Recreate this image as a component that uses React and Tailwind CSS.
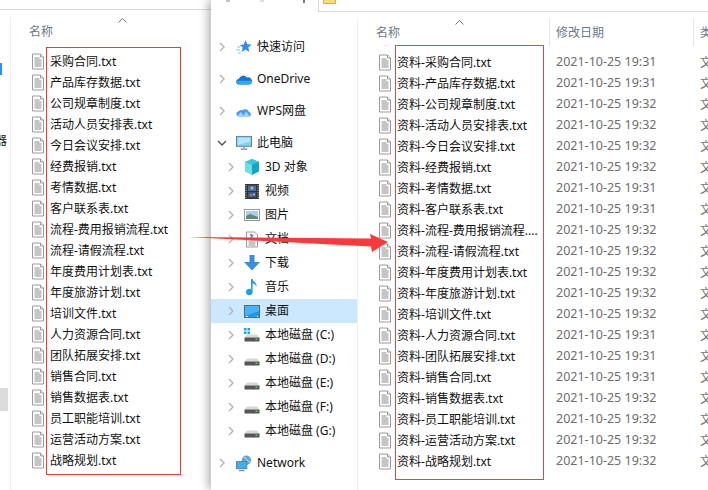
import React from "react";

const names = ["采购合同","产品库存数据","公司规章制度","活动人员安排表","今日会议安排","经费报销","考情数据","客户联系表","流程-费用报销流程","流程-请假流程","年度费用计划表","年度旅游计划","培训文件","人力资源合同","团队拓展安排","销售合同","销售数据表","员工职能培训","运营活动方案","战略规划"];
const minutes = [31,31,32,32,32,32,31,31,32,32,32,32,32,31,31,31,32,32,32,32];

const FileIcon = () => (
  <svg width="14" height="17" viewBox="0 0 14 17" className="shrink-0">
    <path d="M1.5 1h8l3 3v12h-11z" fill="#fff" stroke="#9a9a9a" />
    <path d="M9.5 1v3h3" fill="#eee" stroke="#9a9a9a" />
    <path d="M3.5 5h5M3.5 7h7M3.5 9h7M3.5 11h7M3.5 13h7" stroke="#8c8c8c" />
  </svg>
);

const Chevron = ({ open }) => (
  <svg width="10" height="10" viewBox="0 0 10 10" className="shrink-0">
    {open ? <path d="M1 3l4 4 4-4" fill="none" stroke="#555" strokeWidth="1.4" /> : <path d="M3 1l4 4-4 4" fill="none" stroke="#b5b5b5" strokeWidth="1.4" />}
  </svg>
);

const Up = () => (
  <svg width="9" height="5" viewBox="0 0 9 5"><path d="M.5 4.5l4-4 4 4" fill="none" stroke="#777" /></svg>
);

const Star = () => (
  <svg width="16" height="16" viewBox="0 0 16 16">
    <path d="M9.5 1l1.8 4.3 4.4.3-3.4 2.9 1.1 4.5-3.9-2.4-3.9 2.4 1.1-4.5-3-2.6 4-.4z" fill="#2f8fe8" />
    <path d="M1 8h3M0 11h4M2 14h3" stroke="#8cc4f2" />
  </svg>
);
const OneDrive = () => (
  <svg width="16" height="11" viewBox="0 0 16 11">
    <path d="M3 10.5a2.7 2.7 0 0 1-.3-5.4A4.6 4.6 0 0 1 11 3.6a3.4 3.4 0 0 1 2.5 6.9z" fill="#0f78d4" />
    <path d="M3 10.5a2.5 2.5 0 0 1-2-3.8h14.5a2.8 2.8 0 0 1-2 3.8z" fill="#37a5ea" />
  </svg>
);
const Wps = () => (
  <svg width="16" height="11" viewBox="0 0 16 11">
    <path d="M3 10.5a2.6 2.6 0 0 1-.2-5.2 3 3 0 0 1 3.6-1A4 4 0 0 1 13 6a2.4 2.4 0 0 1 .5 4.5z" fill="#4a9bf5" />
    <path d="M1.5 10L5 6l3 4.5zM7 10.5l3-5 4 5z" fill="#a9d2fb" />
  </svg>
);
const Pc = () => (
  <svg width="17" height="16" viewBox="0 0 17 16">
    <rect x=".5" y="1" width="16" height="10.5" fill="#7fd0f7" stroke="#6b7e8c" />
    <path d="M2 2.5h13v4L2 10z" fill="#b6e6fb" />
    <path d="M5 14.5h7" stroke="#7d97a8" strokeWidth="1.5" /><path d="M8.5 12v2" stroke="#9ab" strokeWidth="2" />
  </svg>
);
const Cube = () => (
  <svg width="16" height="16" viewBox="0 0 16 16">
    <path d="M8 0l7 3v9.5L8 16z" fill="#12a5c4" />
    <path d="M8 0L1 3v9.5L8 16z" fill="#6fdde6" />
    <path d="M1 3l7 3 7-3-7-3z" fill="#39c5dc" />
  </svg>
);
const Film = () => (
  <svg width="14" height="15" viewBox="0 0 14 15">
    <rect width="14" height="15" fill="#333" />
    <path d="M1 1v13M13 1v13" stroke="#bbb" strokeDasharray="1.2 1.2" />
    <rect x="3" y="1.5" width="8" height="5.5" fill="#3f6fb5" />
    <rect x="3" y="8" width="8" height="5.5" fill="#2d5a9c" />
    <circle cx="7" cy="4" r="1.6" fill="#e8b23a" /><circle cx="6" cy="11" r="1.6" fill="#d95f3a" /><circle cx="9" cy="10.5" r="1" fill="#e8d23a" />
  </svg>
);
const Pic = () => (
  <svg width="16" height="12" viewBox="0 0 16 12">
    <rect x=".5" y=".5" width="15" height="11" fill="#fff" stroke="#9a9a9a" />
    <rect x="2" y="2" width="12" height="8" fill="#a9cfe8" />
    <path d="M2 7l4-2 8 3v2H2z" fill="#5d8a76" />
  </svg>
);
const Doc = () => (
  <svg width="14" height="17" viewBox="0 0 14 17">
    <path d="M1.5 1h8l3 3v12h-11z" fill="#fff" stroke="#9a9a9a" />
    <path d="M5 3.5l2.5 1-2 3.5" fill="none" stroke="#2f8fe8" strokeWidth="1.6" />
    <path d="M3.5 10h7M3.5 12h7M3.5 14h7" stroke="#8c8c8c" />
  </svg>
);
const Down = () => (
  <svg width="16" height="16" viewBox="0 0 16 16">
    <path d="M5.5 0h5v7H16l-8 8.5L0 7h5.5z" fill="#3b8ddd" />
  </svg>
);
const Note = () => (
  <svg width="12" height="17" viewBox="0 0 12 17">
    <path d="M5 0h1.6c.4 3 4.4 3.5 4 7.5-.7-1.8-2.4-2.7-4-3V13a3.3 3.3 0 1 1-1.6-2.8z" fill="#1f9bec" />
  </svg>
);
const Desk = () => (
  <svg width="16" height="13" viewBox="0 0 16 13">
    <rect x=".5" y=".5" width="15" height="12" fill="#1e97ee" stroke="#4a6d8a" />
    <path d="M1 1h14v5L1 11z" fill="#48b2f5" />
    <path d="M2 11.5h2M13 11.5h1" stroke="#fff" />
  </svg>
);
const Drive = ({ win }) => (
  <svg width="16" height="14" viewBox="0 0 16 14">
    {win && <path d="M0 0h2.5v2.5H0zM3.5 0H6v2.5H3.5zM0 3.5h2.5V6H0zM3.5 3.5H6V6H3.5z" fill="#17a2ea" />}
    <path d="M3 6.5h10l2.5 3H.5z" fill="#d8d8d8" />
    <rect x=".5" y="9.5" width="15" height="4" fill="#555" />
    <rect x="11.5" y="10.5" width="2" height="1.5" fill="#4fd14f" />
  </svg>
);
const Net = () => (
  <svg width="17" height="17" viewBox="0 0 17 17">
    <circle cx="11" cy="5" r="5" fill="#5aa7dc" />
    <path d="M8 2c2 0 3 1 4 3s2 2 3 1" fill="none" stroke="#cfe8f7" />
    <rect x=".5" y="6.5" width="11" height="7.5" fill="#3fb1f0" stroke="#5c7f97" />
    <path d="M3 16h6" stroke="#7d97a8" strokeWidth="1.5" />
  </svg>
);

const SideRow = ({ icon, label, level = 1, open, active, gap }) => (
  <div className={`flex h-6 items-center ${gap ? "mt-2" : ""} ${active ? "bg-[#cce8ff]" : ""} ${level === 1 ? "pl-[6px]" : "pl-[15px]"}`}>
    <Chevron open={open} />
    <span className={`flex w-4 justify-center ${level === 1 ? "ml-[9px]" : "ml-[8px]"}`}>{icon}</span>
    <span className={`whitespace-nowrap ${level === 1 ? "ml-[5px]" : "ml-[5px]"}`}>{label}</span>
  </div>
);

export default function App() {
  return (
    <div className="relative flex h-[490px] w-[708px] overflow-hidden bg-white text-[12px] leading-none text-[#111] [font-family:'Noto_Sans','Noto_Sans_CJK_SC',sans-serif]">
      {/* back window */}
      <div className="flex w-[211px] shrink-0 flex-col">
        <div className="h-[10px] shrink-0 border-b border-[#d9d9d9]" />
        <div className="flex flex-1">
          <div className="mt-[7px] flex w-[11px] shrink-0 flex-col overflow-hidden border-r border-[#f0f0f0]">
            <div className="mt-[46px] h-[12px] w-[2px] bg-[#2f8fe8]" />
            <div className="mt-[60px] -ml-[5px] text-[12px]">器</div>
            <div className="mt-[241px] h-[23px] w-[8px] bg-[#dcdcdc]" />
          </div>
          <div className="min-w-0 flex-1">
            <div className="relative ml-[18px] mt-[13px] h-[18px] leading-[18px] text-[#6d7a88]">
              名称
              <span className="absolute -top-[5px] left-[89px] flex"><Up /></span>
            </div>
            <div className="ml-[20px] mt-[10px] flex flex-col">
              {names.map((n) => (
                <div key={n} className="flex h-[21px] items-center">
                  <FileIcon />
                  <span className="ml-[5px] whitespace-nowrap">{n}.txt</span>
                </div>
              ))}
            </div>
          </div>
        </div>
      </div>

      {/* front window */}
      <div className="flex min-w-0 flex-1 flex-col bg-white shadow-[-3px_0_9px_rgba(0,0,0,0.3)]">
        <div className="flex h-[12px] shrink-0">
          <div className="relative w-[107px] shrink-0 overflow-hidden">
            <div className="ml-[15px] flex gap-[30px]">
              <div className="h-[2px] w-[4px] bg-[#c4c4c4]" />
              <div className="h-[2px] w-[4px] bg-[#dedede]" />
              <div className="ml-[9px] h-[3px] w-[2px] bg-[#777]" />
            </div>
          </div>
          <div className="flex flex-1 overflow-hidden border-b border-l border-[#d9d9d9] pl-[4px]">
            <div className="h-[4px] w-[13px] shrink-0 border border-t-0 border-[#d8b23e] bg-[#fbdc6f]" />
            <div className="ml-[23px] -mt-[11px] whitespace-nowrap text-[12px] font-bold">资料整理 › 文档 › 工作文件夹 › 文件批量重命名.txt</div>
          </div>
        </div>
        <div className="flex min-h-0 flex-1">
          <div className="mt-[23px] w-[146px] shrink-0 overflow-hidden">
            <SideRow icon={<Star />} label="快速访问" />
            <SideRow icon={<OneDrive />} label="OneDrive" gap />
            <SideRow icon={<Wps />} label="WPS网盘" gap />
            <SideRow icon={<Pc />} label="此电脑" open gap />
            <SideRow level={2} icon={<Cube />} label="3D 对象" />
            <SideRow level={2} icon={<Film />} label="视频" />
            <SideRow level={2} icon={<Pic />} label="图片" />
            <SideRow level={2} icon={<Doc />} label="文档" />
            <SideRow level={2} icon={<Down />} label="下载" />
            <SideRow level={2} icon={<Note />} label="音乐" />
            <SideRow level={2} icon={<Desk />} label="桌面" active />
            <SideRow level={2} icon={<Drive win />} label="本地磁盘 (C:)" />
            <SideRow level={2} icon={<Drive />} label="本地磁盘 (D:)" />
            <SideRow level={2} icon={<Drive />} label="本地磁盘 (E:)" />
            <SideRow level={2} icon={<Drive />} label="本地磁盘 (F:)" />
            <SideRow level={2} icon={<Drive />} label="本地磁盘 (G:)" />
            <SideRow icon={<Net />} label="Network" gap />
          </div>
          <div className="mt-[7px] min-w-0 flex-1 overflow-hidden border-l border-[#eeeeee]">
            <div className="flex h-[27px] text-[#6d7a88]">
              <div className="relative flex w-[192px] shrink-0 items-center border-r border-[#e5e5e5] pl-[18px]">
                名称
                <span className="absolute left-[97px] top-[1px] flex"><Up /></span>
              </div>
              <div className="flex w-[144px] shrink-0 items-center border-r border-[#e5e5e5] pl-[6px]">修改日期</div>
              <div className="flex flex-1 items-center whitespace-nowrap pl-[6px]">类型</div>
            </div>
            <div className="mt-[6px] flex flex-col">
              {names.map((n, i) => (
                <div key={n} className="flex h-[21px] items-center">
                  <div className="flex w-[192px] shrink-0 items-center pl-[20px]">
                    <FileIcon />
                    <span className="ml-[5px] whitespace-nowrap">资料-{n === "流程-费用报销流程" ? n + "...." : n + ".txt"}</span>
                  </div>
                  <div className="w-[144px] shrink-0 whitespace-nowrap pl-[6px] text-[12.5px] text-[#6d6d6d]">2021-10-25 19:{minutes[i]}</div>
                  <div className="whitespace-nowrap pl-[6px] text-[#6d6d6d]">文本文档</div>
                </div>
              ))}
            </div>
          </div>
        </div>
      </div>

      {/* annotations */}
      <div className="absolute left-[46px] top-[47px] h-[428px] w-[135px] border border-[#f03a3a]" />
      <div className="absolute left-[395px] top-[45px] h-[435px] w-[149px] border border-[#d94a4a]" />
      <svg className="absolute left-0 top-0" width="708" height="490" viewBox="0 0 708 490">
        <polygon points="188,237 371,238.5 370,234 388,242 372,252 371,246.5" fill="#f73a3a" />
      </svg>
    </div>
  );
}
